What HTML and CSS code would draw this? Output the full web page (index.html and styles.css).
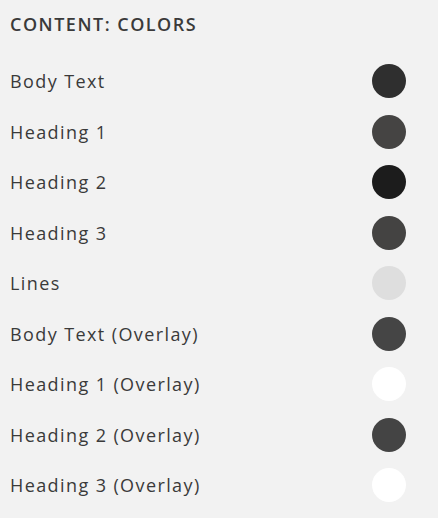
FILE: index.html
```html
<!DOCTYPE html>
<html lang="en">
<head>
    <meta charset="UTF-8">
    <title>Content: Colors</title>
    <link rel="stylesheet" href="styles.css">
</head>
<body>
    <div class="panel">
        <h2 class="panel-title">CONTENT: COLORS</h2>
        <ul class="swatches">
            <li class="swatch"><span>Body Text</span><i class="dot" style="background:#2f2f2f"></i></li>
            <li class="swatch"><span>Heading 1</span><i class="dot" style="background:#454443"></i></li>
            <li class="swatch"><span>Heading 2</span><i class="dot" style="background:#1c1c1c"></i></li>
            <li class="swatch"><span>Heading 3</span><i class="dot" style="background:#444342"></i></li>
            <li class="swatch"><span>Lines</span><i class="dot" style="background:#dedede"></i></li>
            <li class="swatch"><span>Body Text (Overlay)</span><i class="dot" style="background:#454545"></i></li>
            <li class="swatch"><span>Heading 1 (Overlay)</span><i class="dot" style="background:#ffffff"></i></li>
            <li class="swatch"><span>Heading 2 (Overlay)</span><i class="dot" style="background:#444444"></i></li>
            <li class="swatch"><span>Heading 3 (Overlay)</span><i class="dot" style="background:#ffffff"></i></li>
        </ul>
    </div>
</body>
</html>
```

FILE: styles.css
```css
body {
    margin: 0;
    background-color: #f2f2f2;
    font-family: "Open Sans", sans-serif;
    color: #3a3a3a;
}
.panel {
    padding: 13px 32px 0 10px;
}
.panel-title {
    margin: 0 0 21px;
    font-size: 18px;
    font-weight: 600;
    letter-spacing: 1.5px;
    line-height: 22px;
}
.swatches {
    list-style: none;
    margin: 0;
    padding: 0;
}
.swatch {
    display: flex;
    align-items: center;
    justify-content: space-between;
    height: 50.5px;
    font-size: 18px;
    letter-spacing: 1.4px;
}
.dot {
    width: 34px;
    height: 34px;
    border-radius: 50%;
}
```
